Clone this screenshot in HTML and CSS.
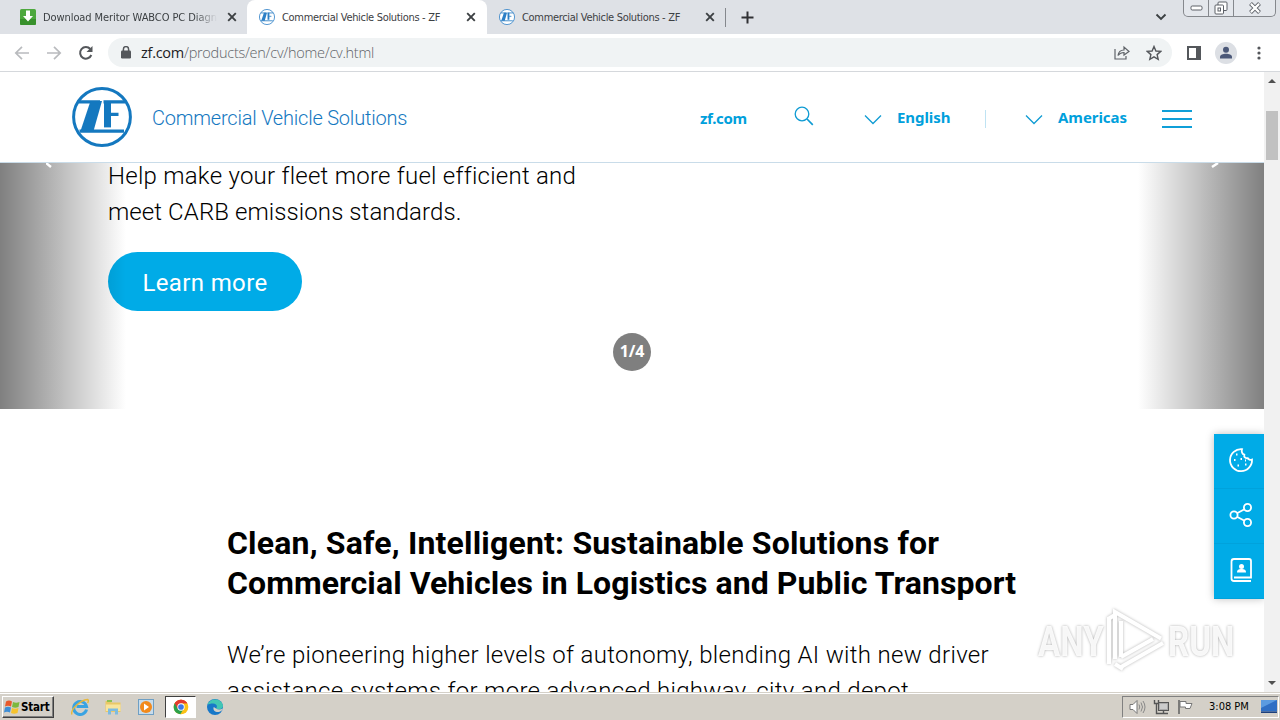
FILE: index.html
```html
<!DOCTYPE html>
<html lang="en">
<head>
<meta charset="utf-8">
<title>Commercial Vehicle Solutions - ZF</title>
<link rel="stylesheet" href="styles.css">
</head>
<body>
<svg class="defs" width="0" height="0">
  <symbol id="zf" viewBox="0 0 60 60">
    <circle cx="30" cy="30" r="28.400" fill="#fff" stroke="currentColor" stroke-width="3"/>
    <path d="M7 14.800H28M31.500 14.800H53M7.500 44.200H52M38 27.400H46.500" stroke="currentColor" stroke-width="3.200" fill="none"/>
    <path d="M35.500 14V40.400" stroke="currentColor" stroke-width="7"/>
    <path d="M18.500 14H30L21.500 44H8.500Z" fill="currentColor"/>
  </symbol>
  <symbol id="x" viewBox="0 0 10 10"><path d="M1.200 1.200l7.600 7.600M8.800 1.200L1.200 8.800" stroke="#3c4043" stroke-width="1.900"/></symbol>
  <symbol id="chev" viewBox="0 0 18 11"><path d="M1 1.500l8 8 8-8" fill="none" stroke="#0f9bd3" stroke-width="1.300"/></symbol>
</svg>
<div class="screen">
  <div class="tabs">
    <div class="tab first">
      <svg class="fav" viewBox="0 0 16 16"><rect width="16" height="16" rx="1.500" fill="#4da83e"/><path d="M0 10h16v4.500a1.500 1.500 0 0 1-1.500 1.500h-13A1.500 1.500 0 0 1 0 14.500z" fill="#38912c"/><path d="M6 1.500h4V7h3l-5 5.500L3 7h3z" fill="#fff"/></svg>
      <span class="title fade">Download Meritor WABCO PC Diagn</span>
      <svg class="close"><use href="#x"/></svg>
    </div>
    <div class="tab active">
      <svg class="fav zfav"><use href="#zf"/></svg>
      <span class="title">Commercial Vehicle Solutions - ZF</span>
      <svg class="close"><use href="#x"/></svg>
    </div>
    <div class="tab">
      <svg class="fav zfav"><use href="#zf"/></svg>
      <span class="title">Commercial Vehicle Solutions - ZF</span>
      <svg class="close"><use href="#x"/></svg>
    </div>
    <div class="newtab"><svg width="13" height="13" viewBox="0 0 13 13"><path d="M6.500 .5v12M.5 6.500h12" stroke="#303134" stroke-width="2"/></svg></div>
    <svg class="tabmenu" viewBox="0 0 12 8"><path d="M1.500 1.500L6 6l4.500-4.500" fill="none" stroke="#3c4043" stroke-width="1.900"/></svg>
    <div class="winbtns">
      <span class="wb"><svg width="13" height="6"><rect x="1" y="1" width="11" height="4" rx="1.200" fill="#fff" stroke="#5c6067"/></svg></span>
      <span class="wb"><svg width="14" height="14"><g fill="#fff" stroke="#5c6067"><rect x="4" y="1" width="9" height="8.500" rx="1"/><rect x="1" y="4" width="8.500" height="9" rx="1"/><rect x="4" y="7" width="2.500" height="3"/></g></svg></span>
      <span class="wb wide"><svg width="14" height="12"><path d="M2.500 1.500l9 9M11.500 1.500l-9 9" stroke="#5c6067" stroke-width="4"/><path d="M2.900 1.900l8.200 8.200M11.100 1.900l-8.200 8.200" stroke="#fff" stroke-width="2.200"/></svg></span>
    </div>
  </div>
  <div class="toolbar">
    <svg class="nav" viewBox="0 0 16 16"><path d="M15 8H2M8 1.800L1.800 8 8 14.200" fill="none" stroke="#b9bbbe" stroke-width="1.700"/></svg>
    <svg class="nav" viewBox="0 0 16 16"><path d="M1 8h13M8 1.800L14.200 8 8 14.200" fill="none" stroke="#b9bbbe" stroke-width="1.700"/></svg>
    <svg class="nav" viewBox="0 0 16 16"><path d="M13.300 10A5.800 5.800 0 1 1 12.300 4" fill="none" stroke="#54575b" stroke-width="2"/><path d="M14.500 1v6h-6z" fill="#54575b"/></svg>
    <div class="omni">
      <svg width="10" height="13" viewBox="0 0 10 13"><rect y="4.500" width="10" height="8" rx="1.200" fill="#54575b"/><path d="M2.400 5V3.200a2.600 2.600 0 0 1 5.200 0V5" fill="none" stroke="#54575b" stroke-width="1.500"/></svg>
      <span class="url"><b>zf.com</b>/products/en/cv/home/cv.html</span>
      <svg class="share" width="16" height="15" viewBox="0 0 16 15"><path d="M1 4v10h11v-3M4 10.500C4.500 7 7 5 10 5V2l5 4.500L10 10V7.500C7.500 7.500 5.500 8.500 4 10.500z" fill="none" stroke="#5f6368" stroke-width="1.200"/></svg>
      <svg width="16" height="16" viewBox="0 0 16 16"><path d="M8 1.500l1.900 4.500 4.900.4-3.700 3.200 1.100 4.800L8 11.900l-4.200 2.500 1.100-4.800L1.200 6.400l4.900-.4z" fill="none" stroke="#54575b" stroke-width="1.400"/></svg>
    </div>
    <svg class="panel" width="14" height="14"><rect x="1" y="1" width="12" height="12" fill="none" stroke="#54575b" stroke-width="2"/><rect x="9" width="5" height="14" fill="#54575b"/></svg>
    <svg class="avatar" width="22" height="22"><circle cx="11" cy="11" r="11" fill="#dcdfe4"/><circle cx="11" cy="7.800" r="3" fill="#4b5878"/><path d="M5 16.500v-1.500c0-2 3-3.200 6-3.200s6 1.200 6 3.200v1.500z" fill="#4b5878"/></svg>
    <svg class="dots" width="4" height="14"><g fill="#54575b"><circle cx="2" cy="2" r="1.600"/><circle cx="2" cy="7" r="1.600"/><circle cx="2" cy="12" r="1.600"/></g></svg>
  </div>
  <div class="viewport">
    <main class="page">
      <header class="site">
        <svg class="logo"><use href="#zf"/></svg>
        <span class="brand">Commercial Vehicle Solutions</span>
        <a class="link zfcom">zf.com</a>
        <svg class="search" viewBox="0 0 20 20"><circle cx="8" cy="8" r="6.800" fill="none" stroke="#0f9bd3" stroke-width="1.300"/><path d="M13 13l5.800 5.800" stroke="#0f9bd3" stroke-width="1.700"/></svg>
        <svg class="chev c1"><use href="#chev"/></svg>
        <a class="link lang">English</a>
        <i class="sep"></i>
        <svg class="chev c2"><use href="#chev"/></svg>
        <a class="link region">Americas</a>
        <span class="burger"><i></i><i></i><i></i></span>
      </header>
      <section class="hero">
        <svg class="arrow prev" viewBox="0 0 8 8"><path d="M0 0l5 4" stroke="#fff" stroke-width="2.500"/></svg>
        <svg class="arrow next" viewBox="0 0 8 8"><path d="M7 0L1 4" stroke="#fff" stroke-width="2.500"/></svg>
        <p class="lead"><span class="l1">Help make your fleet more fuel efficient and</span><br><span class="l2">meet CARB emissions standards.</span></p>
        <a class="btn">Learn more</a>
        <span class="count">1/4</span>
      </section>
      <section class="intro">
        <h1><span class="h1a">Clean, Safe, Intelligent: Sustainable Solutions for</span><br>Commercial Vehicles in Logistics and Public Transport</h1>
        <p>We’re pioneering higher levels of autonomy, blending AI with new driver<br>assistance systems for more advanced highway, city and depot</p>
      </section>
      <aside class="side">
        <a><svg viewBox="0 0 26 26"><path d="M14 2.200A11 11 0 1 0 24 12.500c-1.800.8-3.600.2-4.200-1.300-2.600.4-4-1.200-3.500-3.500C14.200 7 13.200 4.500 14 2.200z"/><path d="M8 7.500h1.500M6 13h1.500M12.500 12h1.500M9.500 18.500H11M17 17.500h1.500M17 13.500h1"/></svg></a>
        <a><svg viewBox="0 0 26 26"><circle cx="6" cy="13" r="3.600"/><circle cx="19.500" cy="5.500" r="3.600"/><circle cx="19.500" cy="20.500" r="3.600"/><path d="M9 11.200l7.500-4M9 14.800l7.500 4"/></svg></a>
        <a><svg viewBox="0 0 26 26"><path d="M23 24H6a2.500 2.500 0 0 1-2.500-2.500v-17A2.500 2.500 0 0 1 6 2h15a2 2 0 0 1 2 2v16.500H6"/><path class="f" d="M9 15.500c0-3 2-3.500 4.500-3.500s4.500.5 4.500 3.500z"/><circle class="f" cx="13.500" cy="9.500" r="2.500"/></svg></a>
      </aside>
    </main>
    <div class="scroll"><i class="up"></i><i class="thumb"></i><i class="down"></i></div>
    <div class="mark"><span>ANY</span><svg width="58" height="64" viewBox="0 0 58 64"><path d="M2 56V10.500L7 7.500M8 13V4L54 30.500M14 59l42-24M14 49l32-18M8 13v38M14 13v36M8 56l8 5"/></svg><span>RUN</span></div>
  </div>
  <div class="taskbar">
    <div class="start"><svg width="17" height="16" viewBox="0 0 17 16"><path d="M2 2.500q3-2 6 0L7 7.500q-3-1.500-6 0z" fill="#e8592b"/><path d="M9 3q3 1.500 6.500 0l-1 5q-3 1.500-6.500 0z" fill="#7cb83c"/><path d="M1 8.500q3-1.500 6 0l-1 5q-3-1.500-6 0z" fill="#3e8ed6"/><path d="M8 9q3 1.500 6.500 0l-1 5q-3.500 1.500-6.500 0z" fill="#f6c32d"/></svg><span>Start</span></div>
    <svg class="app" viewBox="0 0 18 18"><path d="M15.500 11.500A6.500 6.500 0 1 1 15.500 8.500H5.500" fill="none" stroke="#39a3e2" stroke-width="3"/><path d="M1 16.500C-1 12 9 2 16.500 1.500c2 .5 0 3.500 0 3.500" fill="none" stroke="#e8b83a" stroke-width="1.400"/></svg>
    <svg class="app" viewBox="0 0 18 18"><path d="M1.500 3h5l1 1.500h9V14h-15z" fill="#e9c866"/><path d="M3 2h5v2H3z" fill="#8cc152"/><path d="M2 6.500h14.500V13H2z" fill="#f8e49c"/><path d="M4 16.500v-6h10v6h-3v-3.500H7v3.500z" fill="#7dbbe0"/></svg>
    <svg class="app" viewBox="0 0 18 18"><rect x="1.500" y="1.500" width="15" height="15" fill="#c8dceb" stroke="#6e9fc4"/><circle cx="9" cy="9" r="6" fill="#f28a1c"/><path d="M7 5.500v7l5-3.500z" fill="#fff"/></svg>
    <span class="running"><svg viewBox="0 0 48 48"><circle cx="24" cy="24" r="22" fill="#fbc116"/><path d="M24 24L5 13A22 22 0 0 1 43 13H24z" fill="#e33b2e"/><path d="M5 13A22 22 0 0 0 22 46L32 29 24 24z" fill="#2aa14b"/><path d="M24 13h19A22 22 0 0 0 5 13l9 16z" fill="#e33b2e"/><circle cx="24" cy="24" r="11" fill="#fff"/><circle cx="24" cy="24" r="8.500" fill="#3b78e7"/></svg></span>
    <svg class="app" viewBox="0 0 18 18"><circle cx="9" cy="9" r="8" fill="#1878c8"/><path d="M1.500 7C3 0 15-1 17 7.500c.3 4-5 4.500-7 3 2-2 .5-5-3-5-2.500 0-4.500.5-5.500 1.500z" fill="#42c6b4"/><path d="M10 10.500c2 1.500 5 1 6.800 0 .5 1.500-3 4-6 3.500-3-.5-4-3-3-5z" fill="#d4d0c8"/></svg>
    <div class="tray">
      <svg width="17" height="16" viewBox="0 0 17 16"><path d="M1 5.500h3L8 1.500v13L4 10.500H1z" fill="#fff" stroke="#777"/><path d="M10 5.500q1.500 2.500 0 5M12 3.500q3 4.500 0 9M14 2q4 6 0 12" fill="none" stroke="#888"/></svg>
      <svg width="17" height="16" viewBox="0 0 17 16"><rect x="5.500" y="3.500" width="10" height="8" fill="#aaa" stroke="#555"/><rect x="7" y="5" width="7" height="5" fill="#ccc"/><path d="M8 14.500h7M10.500 12v2M1.500 1v3.500h4V1M3.500 5v9.500H8" fill="none" stroke="#555" stroke-width="1.400"/></svg>
      <svg width="17" height="16" viewBox="0 0 17 16"><path d="M2 1v14" stroke="#666" stroke-width="1.600"/><path d="M3 2.500h6v2h6l-2 5H8.500V8H3z" fill="#fff" stroke="#777"/></svg>
      <span class="clock">3:08 PM</span>
      <svg width="16" height="13" viewBox="0 0 16 13"><rect width="16" height="11.500" fill="#2f6fc4"/><path d="M0 0h16L0 8z" fill="#5b9be0"/><path d="M0 11.500h16V13H0z" fill="#1c3f7c"/></svg>
    </div>
  </div>
</div>
</body>
</html>
```
FILE: styles.css
```css
* { box-sizing: border-box; }
body { margin: 0; font-family: Roboto, sans-serif; overflow: hidden; }
.defs { position: absolute; }
svg { display: block; flex: none; }
.screen { width: 1280px; height: 720px; display: flex; flex-direction: column; background: #fff; overflow: hidden; }

/* Browser tabs */
.tabs { height: 34px; flex: none; background: #dee1e6; display: flex; align-items: center; padding-left: 8px; position: relative; font: 11px "DejaVu Sans Condensed", sans-serif; letter-spacing: -.32px; color: #3c4043; }
.tab { width: 240px; height: 34px; display: flex; align-items: center; padding: 0 12px 0 12px; }
.tab.first { width: 239px; padding-right: 10px; }
.tab.active { background: #fff; border-radius: 8px 8px 0 0; padding-right: 11px; }
.fav { width: 16px; height: 16px; margin-right: 7px; }
.zfav { color: #2c7fc6; }
.title { flex: 1; white-space: nowrap; }
.fade { letter-spacing: -.08px; mask-image: linear-gradient(90deg, #000 86%, transparent 99%); margin-right: 8px; }
.first .title { flex: 0 0 176px; }
.close { width: 10px; height: 10px; }
.newtab { border-left: 1px solid #85888d; height: 19px; display: flex; align-items: center; padding-left: 15px; margin-left: -2px; }
.tabmenu { width: 12px; height: 8px; margin-left: auto; margin-right: 16px; }
.winbtns { display: flex; height: 17px; align-self: flex-start; border: 1px solid #85888d; border-top: 0; border-radius: 0 0 5px 5px; margin-right: 4px; width: 93px; background: #e4e7ec; }
.wb { width: 25px; display: flex; align-items: center; justify-content: center; border-right: 1px solid #85888d; }
.wb.wide { flex: 1; border: 0; }

/* Address bar */
.toolbar { height: 38px; flex: none; border-bottom: 1px solid #d5d8dc; display: flex; align-items: center; padding-left: 14px; }
.nav { width: 16px; height: 16px; margin-right: 16px; }
.omni { width: 1064px; height: 29px; border-radius: 15px; background: #f0f3f4; display: flex; align-items: center; padding: 0 10px 0 13px; margin-left: -2px; }
.url { font: 300 14.5px "Open Sans", sans-serif; letter-spacing: -.27px; color: #5f6368; margin-left: 10px; white-space: nowrap; }
.url b { font-weight: 400; color: #202124; }
.share { margin-left: auto; margin-right: 16px; }
.panel { margin-left: 15px; }
.avatar { margin-left: 14px; }
.dots { margin-left: 20px; }

/* Page */
.viewport { flex: 1; min-height: 0; display: flex; position: relative; }
.page { width: 1264px; overflow: hidden; position: relative; color: #000; }
.site { height: 91px; border-bottom: 1px solid #c9dce9; background: #fff; display: flex; align-items: center; padding-left: 72px; position: relative; z-index: 2; color: #00a0dc; }
.logo { width: 60px; height: 60px; color: #1478bf; margin-right: 20px; }
.brand { font-size: 20px; font-weight: 300; letter-spacing: -.21px; color: #1478bf; padding-top: 2px; }
.link { font: 700 15px "Noto Sans", sans-serif; letter-spacing: -.06px; }
.zfcom { position: absolute; left: 700px; top: 36px; letter-spacing: -.35px; }
.search { width: 20px; height: 20px; position: absolute; left: 794px; top: 34px; }
.chev { width: 18px; height: 11px; position: absolute; top: 42px; }
.c1 { left: 864px; } .c2 { left: 1025px; }
.lang { position: absolute; left: 897px; top: 35px; }
.sep { position: absolute; left: 985px; top: 38px; width: 1px; height: 18px; background: #bfe3f3; }
.region { position: absolute; left: 1058px; top: 35px; }
.burger { position: absolute; left: 1162px; top: 38px; width: 30px; display: grid; gap: 6px; }
.burger i { height: 2px; background: #0f9fd8; }
.hero { height: 246px; position: relative; padding-left: 108px; display: flex; flex-direction: column; align-items: flex-start; }
.hero::before, .hero::after { content: ""; position: absolute; top: 0; bottom: 0; width: 126px; pointer-events: none; }
.hero::before { left: 0; background: linear-gradient(90deg, rgba(0,0,0,.5), transparent); }
.hero::after { right: 0; background: linear-gradient(270deg, rgba(0,0,0,.5), transparent); }
.arrow { position: absolute; width: 8px; height: 8px; top: 0; z-index: 1; }
.prev { left: 46px; } .next { right: 45px; }
.lead { margin: -5px 0 0; font-size: 24px; font-weight: 300; line-height: 36px; white-space: nowrap; }
.l1 { letter-spacing: .25px; } .l2 { letter-spacing: .09px; }
.btn { margin-top: 22px; width: 194px; height: 59px; border-radius: 30px; background: #00abe7; color: #fff; font-size: 24px; font-weight: 400; letter-spacing: .36px; display: flex; align-items: center; justify-content: center; padding-top: 2px; }
.count { position: absolute; left: 613px; top: 170px; width: 38px; height: 38px; border-radius: 50%; background: #7f7f7f; color: #fff; font: 700 16px/37px "Noto Sans", sans-serif; letter-spacing: -.2px; text-align: center; }
.intro { padding: 114px 0 0 227px; }
.intro h1 { margin: 0; font: 700 32px/40px Roboto, sans-serif; letter-spacing: .08px; white-space: nowrap; }
.h1a { letter-spacing: .18px; }
.intro p { margin: 34px 0 0; font-size: 24px; font-weight: 300; line-height: 36px; letter-spacing: .32px; white-space: nowrap; }
.side { position: absolute; right: 0; top: 362px; width: 50px; box-shadow: 0 0 8px rgba(0,0,0,.25); }
.side a { height: 55px; background: #00abe7; display: flex; align-items: center; justify-content: center; padding: 0 0 2px 3px; border-bottom: 1px solid #00a2dc; }
.side svg { width: 26px; height: 26px; fill: none; stroke: #fff; stroke-width: 1.8; }
.side .f { fill: #fff; stroke: none; }
.scroll { width: 16px; background: #f1f1f1; position: relative; display: flex; flex-direction: column; align-items: center; }
.up { border: 4px solid transparent; border-top: 0; border-bottom: 4px solid #505050; margin-top: 7px; }
.thumb { width: 12px; height: 49px; background: #c1c1c1; margin-top: 28px; }
.down { border: 4px solid transparent; border-bottom: 0; border-top: 4px solid #505050; margin-top: auto; margin-bottom: 7px; }
.mark { position: absolute; left: 1038px; top: 536px; width: 200px; height: 66px; color: rgba(255,255,255,.9); }
.mark span { position: absolute; top: 8px; font: 700 43px/50px Roboto, sans-serif; transform-origin: 0 50%; transform: scaleX(.77); text-shadow: 0 0 3px rgba(0,0,0,.35); }
.mark span:last-child { left: 130px; }
.mark svg { position: absolute; left: 69px; top: 0; fill: none; stroke: #fff; stroke-width: 4; filter: drop-shadow(0 0 1.5px rgba(0,0,0,.3)); }

/* Taskbar */
.taskbar { height: 28px; flex: none; background: #d4d0c8; box-shadow: inset 0 1px #d4d0c8, inset 0 2px #fff; display: flex; align-items: center; padding: 1px 1px 0 2px; }
.start { width: 52px; height: 22px; border: 1px solid; border-color: #fff #404040 #404040 #fff; box-shadow: inset -1px -1px #808080; display: flex; align-items: center; padding-left: 1px; font: 700 11.5px "DejaVu Sans Condensed", sans-serif; letter-spacing: -.2px; margin-right: 17px; }
.app { width: 18px; height: 18px; margin-right: 15px; }
.running { width: 31px; height: 22px; background: #fff; border: 1px solid; border-color: #404040 #fff #fff #404040; display: flex; align-items: center; justify-content: center; margin-right: 10px; margin-left: -5px; }
.running svg { width: 16px; height: 16px; }
.tray { margin-left: auto; width: 157px; height: 22px; border: 1px solid; border-color: #808080 #fff #fff #808080; display: flex; align-items: center; gap: 7px; padding-left: 6px; }
.clock { font: 11px "DejaVu Sans Condensed", sans-serif; margin: 0 5px 0 8px; white-space: nowrap; }
```
